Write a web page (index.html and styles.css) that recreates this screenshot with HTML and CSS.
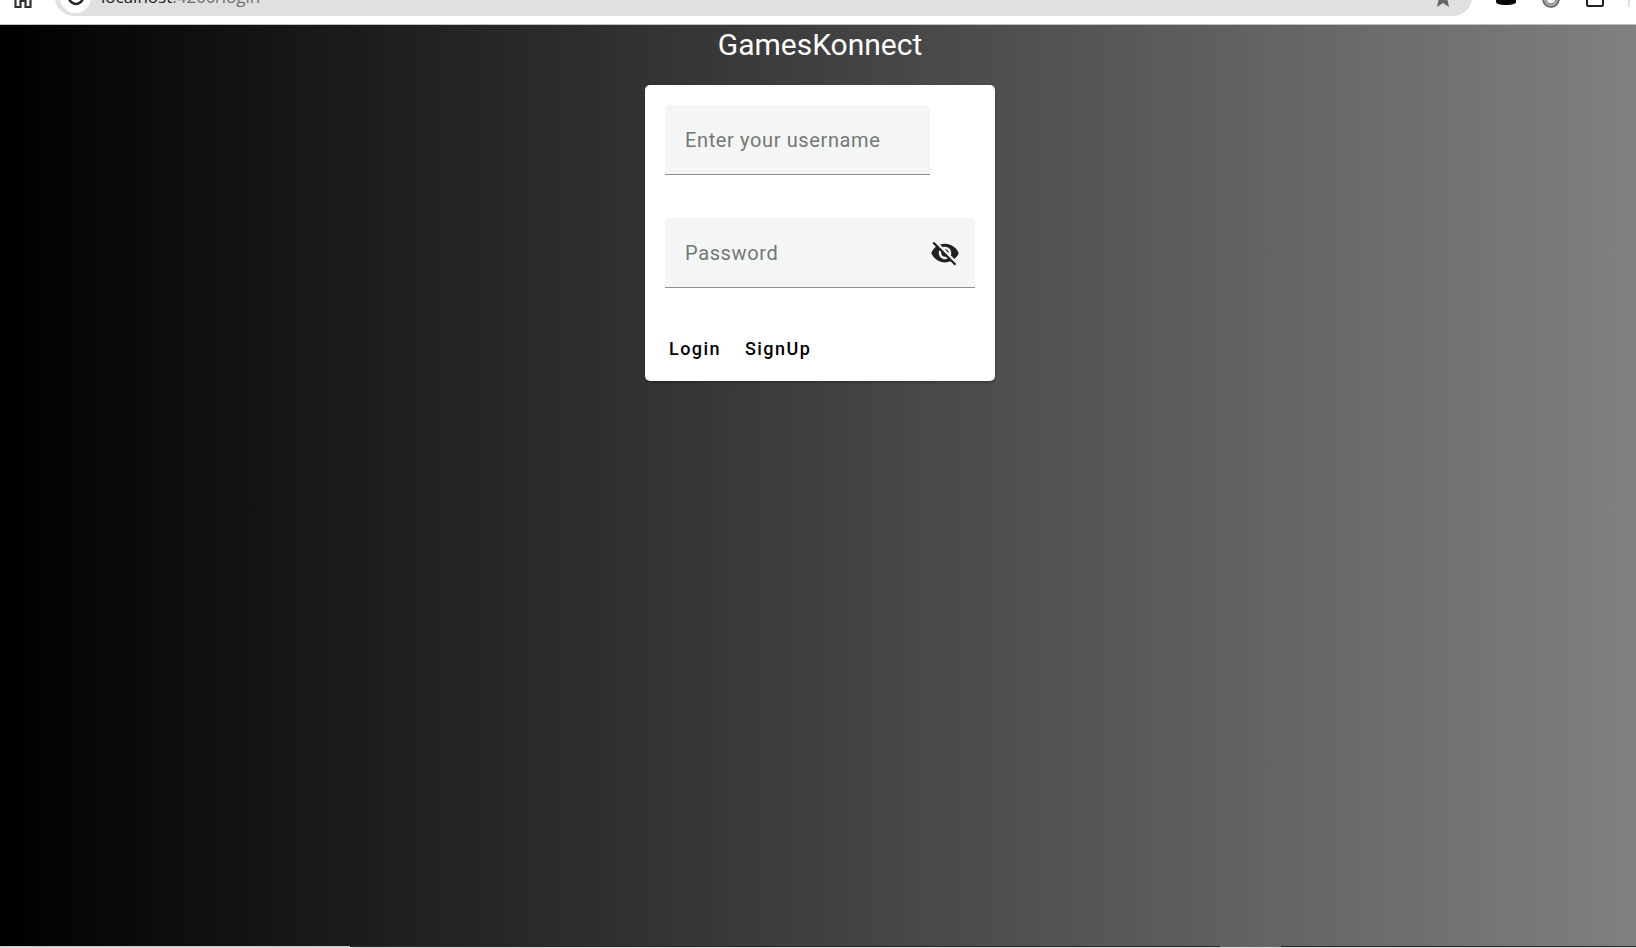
FILE: index.html
```html
<!DOCTYPE html>
<html lang="en">
<head>
<meta charset="utf-8">
<title>GamesKonnect</title>
<link rel="stylesheet" href="styles.css">
</head>
<body>
<header class="toolbar">
  <div class="toolbar-row">
    <button class="home" aria-label="Home"><svg width="18" height="24" viewBox="0 0 18 24"><path d="M1.500 9L9 3l7.500 6v13h-5v-6H6.500v6h-5z" fill="none" stroke="#303236" stroke-width="2.200"/></svg></button>
    <div class="address">
      <span class="site-info"><svg width="18" height="18" viewBox="0 0 18 18"><circle cx="9" cy="9" r="7" fill="none" stroke="#202124" stroke-width="2.500"/></svg></span>
      <span class="url">localhost<span class="url-path">:4200/login</span></span>
      <svg class="star" width="22" height="26" viewBox="0 0 22 26"><path d="M11 19L17 23l-1.500-7L21 11l-7-1-3-7-3 7-7 1 5.500 5L5 23z" fill="#666"/></svg>
    </div>
    <div class="extensions">
      <svg width="20" height="22" viewBox="0 0 20 22"><path d="M0 8h20v8c0 2-4 3-10 3s-10-1-10-3z" fill="#080808"/></svg>
      <svg width="18" height="24" viewBox="0 0 18 24"><circle cx="9" cy="14" r="7" fill="#f4f4f4" stroke="#a4a6a8" stroke-width="3"/><circle cx="9" cy="14" r="8" fill="none" stroke="#5f6368" stroke-width="1.500"/><circle cx="9" cy="14" r="5" fill="none" stroke="#5f6368" stroke-width="1"/></svg>
      <svg width="18" height="22" viewBox="0 0 18 22"><rect x="1" y="4" width="16" height="16" rx="1" fill="none" stroke="#202124" stroke-width="2"/></svg>
    </div>
    <span class="divider"></span>
  </div>
</header>
<main class="page">
  <h1 class="title">GamesKonnect</h1>
  <form class="card">
    <div class="fields">
      <label class="field field-short"><input class="input" type="text" placeholder="Enter your username" aria-label="Enter your username"></label>
      <div class="field">
        <input class="input" type="password" placeholder="Password" aria-label="Password">
        <button class="toggle" type="button" aria-label="Show password"><svg width="30" height="30" viewBox="0 0 24 24" fill="#202124"><path d="M12 7c2.760 0 5 2.240 5 5 0 .65-.13 1.260-.36 1.830l2.920 2.920c1.510-1.260 2.700-2.890 3.430-4.750-1.730-4.390-6-7.500-11-7.500-1.400 0-2.740.25-3.980.7l2.160 2.160C10.740 7.130 11.350 7 12 7zM2 4.270l2.280 2.280.46.46C3.080 8.300 1.780 10.020 1 12c1.730 4.390 6 7.500 11 7.500 1.550 0 3.030-.3 4.380-.84l.42.42L19.730 22 21 20.730 3.270 3 2 4.270zM7.530 9.800l1.550 1.550c-.05.21-.08.43-.08.65 0 1.660 1.340 3 3 3 .22 0 .44-.03.65-.08l1.550 1.550c-.67.33-1.410.53-2.200.53-2.760 0-5-2.240-5-5 0-.79.2-1.530.53-2.200zm4.310-.78l3.150 3.150.02-.16c0-1.660-1.340-3-3-3l-.17.01z"/></svg></button>
      </div>
    </div>
    <div class="actions">
      <button class="action" type="button">Login</button>
      <button class="action" type="button">SignUp</button>
    </div>
  </form>
</main>
<footer class="taskbar"><span class="task-search"></span><span class="task-active"></span></footer>
</body>
</html>
```
FILE: styles.css
```css
* { box-sizing: border-box; }
body {
  margin: 0;
  height: 100vh;
  overflow: hidden;
  display: flex;
  flex-direction: column;
  font-family: Roboto, sans-serif;
}
button { border: 0; background: none; font: inherit; }
svg { display: block; }

.toolbar {
  height: 25px;
  flex: none;
  overflow: hidden;
  display: flex;
  flex-direction: column;
  justify-content: flex-end;
  padding-bottom: 8px;
  background: #fff;
  border-bottom: 1px solid #bfc1c0;
}
.toolbar-row { flex: none; display: flex; align-items: center; }
.home { width: 55px; padding: 0 0 0 14px; }
.address {
  flex: 1;
  height: 38px;
  display: flex;
  align-items: center;
  padding: 0 18px 0 5px;
  border-radius: 20px;
  background: #e0e0e0;
}
.site-info {
  width: 31px;
  height: 31px;
  display: grid;
  place-items: center;
  border-radius: 50%;
  background: #fff;
}
.url {
  flex: 1;
  padding-left: 10px;
  font: 17px/24px "Open Sans", sans-serif;
  color: #202124;
}
.url-path { color: #6a6d70; }
.extensions { display: flex; align-items: center; gap: 26px; padding: 0 24px; }
.divider { width: 2px; height: 20px; margin-right: 6px; background: #e3dfd9; }

.page {
  flex: 1;
  display: flex;
  flex-direction: column;
  align-items: center;
  padding-left: 4px;
  background: linear-gradient(to right, #000, #808080);
}
.title {
  margin: 0 0 20px;
  font-size: 30px;
  font-weight: 400;
  line-height: 40px;
  color: #fff;
}
.card {
  width: 350px;
  border-radius: 5px;
  background: #fff;
  box-shadow: 0 2px 2px rgba(0, 0, 0, 0.2);
}
.fields {
  display: flex;
  flex-direction: column;
  gap: 43px;
  padding: 20px 20px 28px;
}
.field {
  height: 70px;
  display: flex;
  align-items: center;
  padding-left: 20px;
  border-bottom: 1px solid #8b8f96;
  border-radius: 5px 5px 0 0;
  background: #f4f6f5;
}
.field-short { width: 265px; }
.input {
  flex: 1;
  min-width: 0;
  padding: 0;
  border: 0;
  outline: 0;
  background: none;
  font: 20px/30px Roboto, sans-serif;
  letter-spacing: 0.03125em;
}
.input::placeholder { color: #747777; opacity: 1; }
.toggle { padding: 15px; }
.actions { display: flex; align-items: center; padding: 10px; }
.action {
  min-width: 80px;
  height: 45px;
  padding: 0 10px;
  font-size: 18px;
  font-weight: 500;
  letter-spacing: 0.08em;
  color: #000;
}

.taskbar { flex: none; display: flex; height: 2px; background: #26282a; border-bottom: 1px solid #dcdcdc; }
.task-search { width: 350px; margin-right: 870px; background: #c5cbc8; }
.task-active { width: 61px; background: #666; }
```
